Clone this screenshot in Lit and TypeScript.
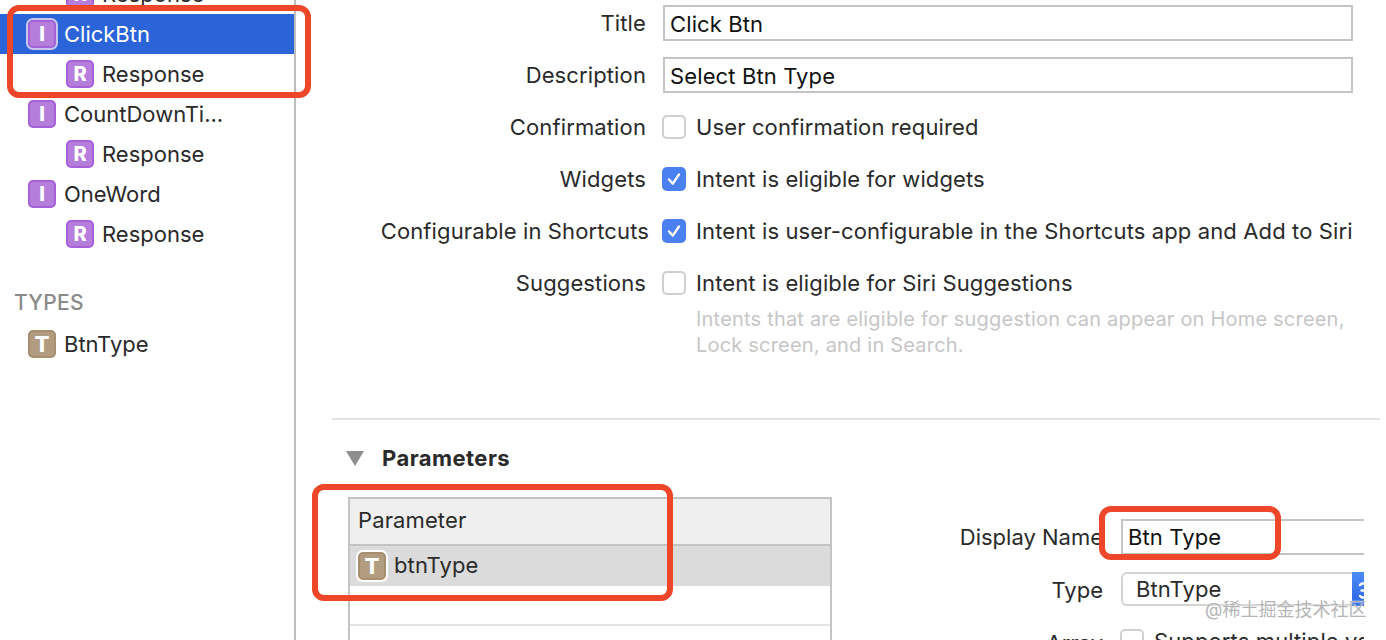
import { LitElement, html, css } from "lit";
import { customElement } from "lit/decorators.js";

const check = html`<svg viewBox="0 0 24 24" width="24" height="24"><path d="M7 12.5l3.8 4.2L17 7.5" fill="none" stroke="#fff" stroke-width="2.4" stroke-linecap="round" stroke-linejoin="round"/></svg>`;
const stepper = html`<svg viewBox="0 0 12 34" width="12" height="34"><path d="M8 13l2-1.5h2M9.5 18.5H12M8 24l2 1.5h2" fill="none" stroke="#fff" stroke-width="2.4" stroke-linecap="round"/></svg>`;

@customElement("app-root")
export class AppRoot extends LitElement {
  static styles = css`
    :host { display: block; width: 1386px; height: 640px; overflow: hidden; position: relative; background: #fff;
      font-family: Inter, "Noto Sans CJK SC", sans-serif; font-size: 22px; letter-spacing: 0.12px; color: #2a2a2a; }
    .page { display: flex; height: 640px; }
    .side { width: 294px; flex: none; border-right: 2px solid #bdbdbd; overflow: hidden; }
    .list { margin-top: -26px; display: flex; flex-direction: column; }
    .row { height: 40px; display: flex; align-items: center; gap: 8px; padding-left: 28px; white-space: nowrap; letter-spacing: 0; }
    .row.sub { padding-left: 66px; }
    .row.sel { background: #2a64d8; color: #fff; }
    .badge { width: 28px; height: 28px; box-sizing: border-box; border-radius: 5px; border: 2px solid #a660d8; background: #b57edc;
      color: #fff; font-size: 20px; font-weight: 800; display: flex; align-items: center; justify-content: center; flex: none; }
    .badge.t { background: #b29c80; border-color: #a68e70; font-size: 22px; }
    .row.sel .badge { outline: 2px solid #c9c6ee; outline-offset: 0; }
    .tb { box-shadow: 0 0 0 2px #fff; }
    .head { color: #8a8a8a; font-size: 21px; font-weight: 500; letter-spacing: 0.3px; margin: 34px 0 6px 14px; height: 30px; line-height: 30px; }
    .main { flex: 1; min-width: 0; padding-left: 36px; display: flex; flex-direction: column; }
    .main > * { flex: none; }
    .form { display: grid; grid-template-columns: 314px 690px; column-gap: 17px; align-items: center; padding-top: 5px; grid-auto-rows: 36px; row-gap: 16px; }
    .lab { text-align: right; white-space: nowrap; }
    .lab.long { margin-right: -3px; }
    .input { box-sizing: border-box; height: 36px; border: 2px solid #c4c4c4; padding: 1px 0 0 5px; display: flex; align-items: center; color: #111; white-space: nowrap; overflow: hidden; }
    .chk { display: flex; align-items: center; gap: 10px; white-space: nowrap; margin-left: -1px; }
    .box { width: 24px; height: 24px; box-sizing: border-box; border: 2px solid #cfcfcf; border-radius: 5px; background: #fff; flex: none; }
    .box.on { background: #4a80f0; border: none; display: flex; align-items: center; justify-content: center; }
    .help { grid-column: 2; padding-left: 33px; color: #c6c6c6; font-size: 20px; letter-spacing: 0.2px; line-height: 26px; height: 52px; margin-top: -11px; align-self: start; white-space: nowrap; }
    .div { height: 2px; background: #e2e2e2; margin-top: 65px; width: 1048px; }
    .sec { display: flex; align-items: center; gap: 18px; margin-top: 24px; height: 28px; font-weight: 700; letter-spacing: 0.45px; padding-left: 14px; }
    .tri { width: 0; height: 0; border-left: 9px solid transparent; border-right: 9px solid transparent; border-top: 15px solid #8e8e8e; }
    .lower { display: flex; margin-top: 25px; padding-left: 16px; align-items: flex-start; }
    .table { width: 484px; flex: none; box-sizing: border-box; border: 2px solid #c4c4c4; border-bottom: none; height: 200px; }
    .th { box-sizing: border-box; height: 47px; background: #efefef; border-bottom: 2px solid #c4c4c4; display: flex; align-items: center; padding: 0 0 3px 8px; }
    .tr { height: 40px; background: #dbdbdb; display: flex; align-items: center; gap: 8px; padding-left: 8px; }
    .tr span:last-child { margin-top: -3px; }
    .blank { height: 40px; border-bottom: 2px solid #e4e4e4; box-sizing: border-box; }
    .props { width: 532px; flex: none; overflow: hidden; display: grid; grid-template-columns: 271px 243px; column-gap: 18px; grid-auto-rows: 35px; row-gap: 18px; align-items: center; padding-top: 22px; height: 143px; box-sizing: border-box; }
    .props .lab { letter-spacing: 0; }
    .input.clip { border-right: none; }
    .popup { box-sizing: border-box; height: 34px; margin-top: -1px; border: 2px solid #d4d4d4; border-right: none; border-radius: 6px 0 0 6px; padding-left: 13px; display: flex; align-items: center; justify-content: space-between; white-space: nowrap; }
    .step { width: 12px; height: 34px; margin: -2px 0; background: linear-gradient(#4c8df5, #2a62e6); display: block; }
    .step svg { display: block; }
    .props .chk { margin-top: -3px; }
    .wm { position: absolute; left: 1205px; top: 598px; font-size: 18px; line-height: 24px; letter-spacing: 0; color: #b5b5b5; white-space: nowrap; text-shadow: 0 0 2px #fff; }
    .mark { position: absolute; box-sizing: border-box; border: 6px solid #ee4628; border-radius: 12px; pointer-events: none; }
    .m1 { left: 7px; top: 5px; width: 304px; height: 93px; }
    .m2 { left: 312px; top: 484px; width: 361px; height: 117px; }
    .m3 { left: 1099px; top: 506px; width: 182px; height: 54px; }
  `;

  private badge(ch: string, cls = "") {
    return html`<span class="badge ${cls}">${ch}</span>`;
  }

  render() {
    return html`
      <div class="page">
        <aside class="side">
          <div class="list">
            <div class="row sub">${this.badge("R")}<span>Response</span></div>
            <div class="row sel">${this.badge("I")}<span>ClickBtn</span></div>
            <div class="row sub">${this.badge("R")}<span>Response</span></div>
            <div class="row">${this.badge("I")}<span>CountDownTi...</span></div>
            <div class="row sub">${this.badge("R")}<span>Response</span></div>
            <div class="row">${this.badge("I")}<span>OneWord</span></div>
            <div class="row sub">${this.badge("R")}<span>Response</span></div>
            <div class="head">TYPES</div>
            <div class="row">${this.badge("T", "t")}<span>BtnType</span></div>
          </div>
        </aside>
        <main class="main">
          <div class="form">
            <div class="lab">Title</div><div class="input">Click Btn</div>
            <div class="lab">Description</div><div class="input">Select Btn Type</div>
            <div class="lab">Confirmation</div><div class="chk"><span class="box"></span>User confirmation required</div>
            <div class="lab">Widgets</div><div class="chk"><span class="box on">${check}</span>Intent is eligible for widgets</div>
            <div class="lab long">Configurable in Shortcuts</div><div class="chk"><span class="box on">${check}</span>Intent is user-configurable in the Shortcuts app and Add to Siri</div>
            <div class="lab">Suggestions</div><div class="chk"><span class="box"></span>Intent is eligible for Siri Suggestions</div>
            <div class="help">Intents that are eligible for suggestion can appear on Home screen,<br />Lock screen, and in Search.</div>
          </div>
          <div class="div"></div>
          <div class="sec"><span class="tri"></span><span>Parameters</span></div>
          <div class="lower">
            <div class="table">
              <div class="th">Parameter</div>
              <div class="tr"><span class="badge t tb">T</span><span>btnType</span></div>
              <div class="blank"></div>
            </div>
            <div class="props">
              <div class="lab">Display Name</div><div class="input clip">Btn Type</div>
              <div class="lab">Type</div><div class="popup">BtnType<span class="step">${stepper}</span></div>
              <div class="lab">Array</div><div class="chk"><span class="box"></span>Supports multiple values</div>
            </div>
          </div>
        </main>
      </div>
      <div class="wm">@稀土掘金技术社区</div>
      <div class="mark m1"></div>
      <div class="mark m2"></div>
      <div class="mark m3"></div>
    `;
  }
}
